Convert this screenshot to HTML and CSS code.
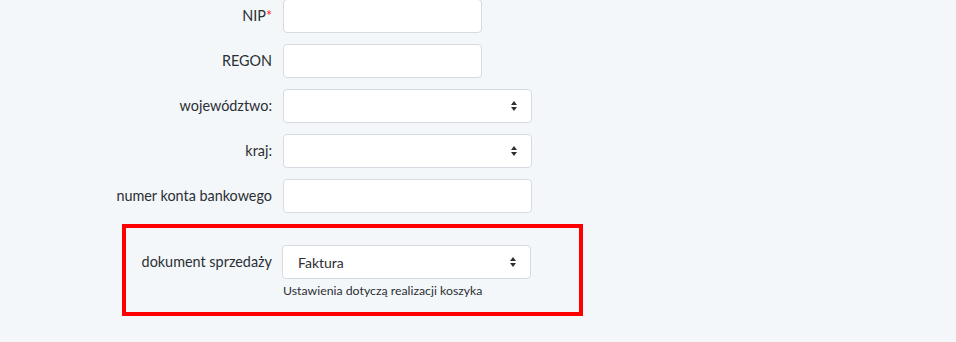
FILE: index.html
```html
<!DOCTYPE html>
<html lang="pl">
<head>
  <meta charset="UTF-8"/>
  <title>Dane firmy</title>
  <link rel="stylesheet" href="styles.css">
</head>
<body>

<form class="form">
  <div class="row">
    <label class="lbl">NIP<span class="req">*</span></label>
    <input class="field short" type="text">
  </div>
  <div class="row">
    <label class="lbl">REGON</label>
    <input class="field short" type="text">
  </div>
  <div class="row">
    <label class="lbl">województwo:</label>
    <div class="field select"><span></span><i class="caret"></i></div>
  </div>
  <div class="row">
    <label class="lbl">kraj:</label>
    <div class="field select"><span></span><i class="caret"></i></div>
  </div>
  <div class="row">
    <label class="lbl">numer konta bankowego</label>
    <input class="field" type="text">
  </div>

  <!-- zaznaczony blok -->
  <div class="marked">
    <div class="row in-box">
      <label class="lbl">dokument sprzedaży</label>
      <div class="field select"><span>Faktura</span><i class="caret"></i></div>
    </div>
    <div class="hint">Ustawienia dotyczą realizacji koszyka</div>
  </div>
</form>

</body>
</html>
```

FILE: styles.css
```css
/* ========== Base ========== */
* { margin:0; padding:0; box-sizing:border-box }
body { font-family:Lato,"Noto Sans",Arial,sans-serif; background:#f4f7fa; color:#2b2f33; font-size:14px; height:342px; overflow:hidden }

/* ========== Form ========== */
.form { display:flex; flex-direction:column; gap:11px; margin-top:-1px }
.row { display:flex; align-items:center; gap:11px }
.lbl { width:272px; text-align:right; line-height:34px; font-size:14.4px }
.req { color:#ff1a1a }

.field {
  width: 249px;
  height: 34px;
  background: #fff;
  border: 1px solid #d6dbe1;
  border-radius: 4px;
  font: inherit;
  color: inherit;
}
.field.short { width:199px }
.select {
  display: flex;
  align-items: center;
  justify-content: space-between;
  padding: 0 13px 0 15px;
}
.caret {
  width: 7px;
  height: 10px;
  position: relative;
}
.caret::before, .caret::after {
  content: "";
  position: absolute;
  left: 0;
  border-left: 3.5px solid transparent;
  border-right: 3.5px solid transparent;
}
.caret::before { top:0; border-bottom:4px solid #2b2f33 }
.caret::after  { bottom:0; border-top:4px solid #2b2f33 }

/* ========== Marked block ========== */
.marked {
  margin-left: 122px;
  width: 461px;
  height: 92px;
  border: 4px solid #ff0000;
  padding-top: 17px;
}
.row.in-box .lbl { width:146px }
.row.in-box { gap:10px }
.hint { margin:4px 0 0 157px; font-size:12.3px; line-height:16px }
```
